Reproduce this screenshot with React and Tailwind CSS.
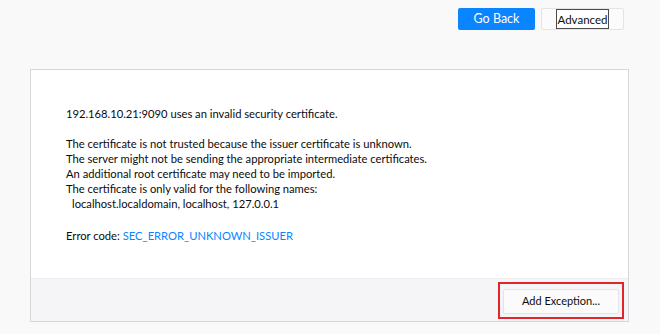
export default function App() {
  const font = { fontFamily: 'Lato, "Open Sans", sans-serif' }
  return (
    <div className="w-[660px] h-[334px] bg-[#f9f9fa] overflow-hidden text-[#0c0c0d]" style={font}>
      <div className="flex justify-end gap-[6px] pt-[8px] pr-[36px]">
        <button className="w-[77px] h-[22px] bg-[#0a84ff] text-white text-[12.5px] rounded-[2px]">Go Back</button>
        <button className="w-[83px] h-[22px] bg-[#fbfbfc] border border-[#e4e4e6] rounded-[2px] flex justify-center">
          <span className="h-full px-[1px] border border-[#4a4a4f] text-[11.5px] leading-[20px] bg-white">Advanced</span>
        </button>
      </div>
      <div className="ml-[30px] mt-[39px] w-[599px] border border-[#d7d7db] bg-white">
        <div className="h-[208px] pl-[35px] pt-[36px] text-[11.2px] leading-[15px]">
          <p>192.168.10.21:9090 uses an invalid security certificate.</p>
          <p className="mt-[15px]">The certificate is not trusted because the issuer certificate is unknown.</p>
          <p>The server might not be sending the appropriate intermediate certificates.</p>
          <p>An additional root certificate may need to be imported.</p>
          <p>The certificate is only valid for the following names:</p>
          <p className="pl-[6px]">localhost.localdomain, localhost, 127.0.0.1</p>
          <p className="mt-[17px]">
            Error code: <span className="text-[#0a84ff]">SEC_ERROR_UNKNOWN_ISSUER</span>
          </p>
        </div>
        <div className="h-[43px] bg-[#f5f5f7] border-t border-[#ededf0] flex justify-end items-end pr-[4px] pb-[2px]">
          <div className="border-2 border-[#e0262b] px-[3px] py-[3px]">
            <button className="w-[116px] h-[25px] bg-[#fbfbfc] border border-[#e4e4e6] text-[11px] rounded-[2px]">Add Exception...</button>
          </div>
        </div>
      </div>
    </div>
  )
}
